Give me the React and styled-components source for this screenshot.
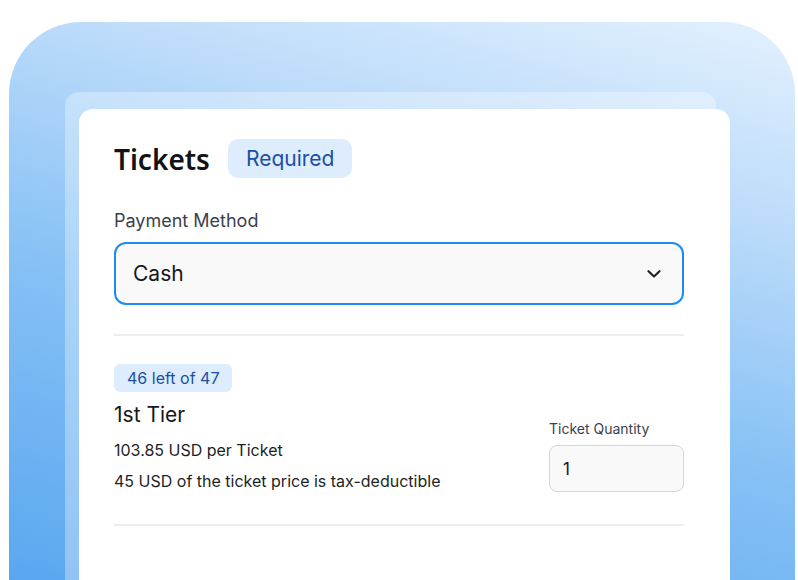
import React from "react";
import styled, { createGlobalStyle } from "styled-components";

const GlobalStyle = createGlobalStyle`
    html, body {
        margin: 0;
        padding: 0;
        background: #ffffff;
    }
    * {
        box-sizing: border-box;
    }
`;

const App = () => {
    return (
        <>
            <GlobalStyle />
            <Page>
                <Backdrop>
                    <Frame>
                        <Card>
                            <Header>
                                <Title>Tickets</Title>
                                <Badge size="large">Required</Badge>
                            </Header>

                            <FieldLabel>Payment Method</FieldLabel>
                            <Select>
                                <span>Cash</span>
                                <Chevron viewBox="0 0 14 8" aria-hidden="true">
                                    <path
                                        d="M1.5 1.2 L7 6.4 L12.5 1.2"
                                        fill="none"
                                        stroke="#1c1f24"
                                        strokeWidth="2.1"
                                        strokeLinecap="round"
                                        strokeLinejoin="round"
                                    />
                                </Chevron>
                            </Select>

                            <Divider />

                            <TierRow>
                                <TierInfo>
                                    <Badge>46 left of 47</Badge>
                                    <TierName>1st Tier</TierName>
                                    <TierText>103.85 USD per Ticket</TierText>
                                    <TierText>45 USD of the ticket price is tax-deductible</TierText>
                                </TierInfo>
                                <Quantity>
                                    <SmallLabel>Ticket Quantity</SmallLabel>
                                    <QuantityInput>1</QuantityInput>
                                </Quantity>
                            </TierRow>

                            <Divider />
                        </Card>
                    </Frame>
                </Backdrop>
            </Page>
        </>
    );
};

export default App;

// Styled components
const Page = styled.div`
    width: 798px;
    height: 580px;
    overflow: hidden;
    padding: 22px 3px 0 9px;
    font-family: Inter, "Noto Sans", sans-serif;
`;

const Backdrop = styled.div`
    height: 100%;
    border-radius: 72px 72px 0 0;
    padding: 70px 0 0 56px;
    background: linear-gradient(196deg, #e3f1fe 0%, #bddcfa 26%, #87c1f5 58%, #5aa7f0 100%);
    overflow: hidden;
`;

const Frame = styled.div`
    display: flex;
    width: 651px;
    height: 100%;
    padding: 17px 0 0 14px;
    border-radius: 14px 14px 0 0;
    background: rgba(255, 255, 255, 0.32);
`;

const Card = styled.div`
    flex-shrink: 0;
    width: 651px;
    height: 100%;
    padding: 30px 46px 0 35px;
    border-radius: 14px 14px 0 0;
    background: #ffffff;
`;

const Header = styled.div`
    display: flex;
    align-items: center;
    gap: 18px;
`;

const Title = styled.h1`
    margin: 0;
    font-family: "Noto Sans", Inter, sans-serif;
    font-size: 28px;
    font-weight: 600;
    color: #111316;
`;

const Badge = styled.span`
    display: inline-flex;
    align-items: center;
    align-self: flex-start;
    height: ${(props) => (props.size === "large" ? "39px" : "28px")};
    padding: ${(props) => (props.size === "large" ? "0 18px" : "0 13px")};
    border-radius: ${(props) => (props.size === "large" ? "10px" : "6px")};
    background: #ddedfd;
    color: #1c4ea6;
    font-size: ${(props) => (props.size === "large" ? "21px" : "16px")};
    font-weight: 400;
`;

const FieldLabel = styled.div`
    margin-top: 31px;
    margin-bottom: 9px;
    font-size: 18px;
    line-height: 24px;
    color: #3b4150;
`;

const Select = styled.div`
    display: flex;
    align-items: center;
    justify-content: space-between;
    height: 63px;
    padding: 0 21px 0 17px;
    border: 2px solid #1a8cf2;
    border-radius: 12px;
    background: #f9f9f9;
    font-size: 21px;
    color: #15181c;
`;

const Chevron = styled.svg`
    width: 14px;
    height: 8px;
`;

const Divider = styled.hr`
    margin: 29px 0 0;
    height: 2px;
    border: none;
    background: #eceef1;
`;

const TierRow = styled.div`
    display: flex;
    align-items: flex-end;
    justify-content: space-between;
    margin-top: 28px;
    margin-bottom: 32px;
`;

const TierInfo = styled.div`
    display: flex;
    flex-direction: column;
`;

const TierName = styled.div`
    margin-top: 9px;
    margin-bottom: 10px;
    font-size: 21px;
    line-height: 28px;
    color: #15181c;
`;

const TierText = styled.div`
    font-size: 16px;
    line-height: 22px;
    color: #1c1f24;

    & + & {
        margin-top: 9px;
    }
`;

const Quantity = styled.div`
    display: flex;
    flex-direction: column;
`;

const SmallLabel = styled.div`
    margin-bottom: 6px;
    font-size: 14px;
    line-height: 20px;
    color: #3b4150;
`;

const QuantityInput = styled.div`
    display: flex;
    align-items: center;
    width: 135px;
    height: 47px;
    padding-left: 13px;
    border: 1.5px solid #d3d6db;
    border-radius: 8px;
    background: #f9f9f9;
    font-size: 17px;
    color: #15181c;
`;
